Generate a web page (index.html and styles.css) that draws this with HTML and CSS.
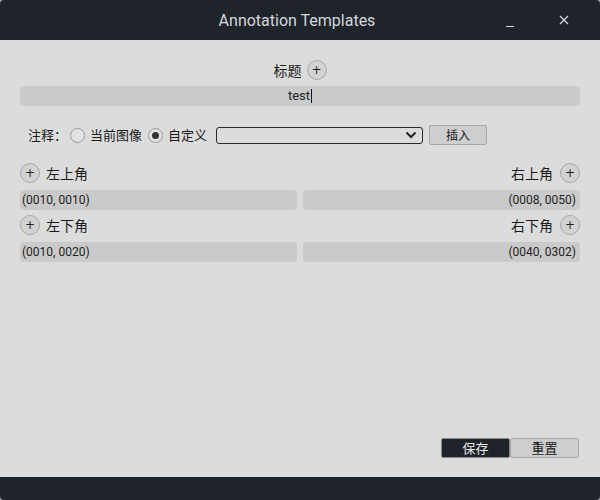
FILE: index.html
```html
<!DOCTYPE html>
<html>
<head>
<meta charset="utf-8">
<link rel="stylesheet" href="styles.css">
</head>
<body>
<div class="window">
  <div class="titlebar">
    <div></div>
    <div class="title">Annotation Templates</div>
    <div class="controls">
      <span class="ctl min"><svg width="10" height="10" viewBox="0 0 10 10"><path d="M1 8.5h8" stroke="#d6d9de" stroke-width="1"/></svg></span>
      <span class="ctl close"><svg width="10" height="10" viewBox="0 0 10 10"><path d="M1 1l8 8M9 1l-8 8" stroke="#d6d9de" stroke-width="1.2"/></svg></span>
    </div>
  </div>
  <div class="content">
    <div class="head-row">
      <span class="label">标题</span>
      <span class="plus">+</span>
    </div>
    <div class="field center">test<span class="caret"></span></div>
    <div class="note-row">
      <span class="label sm">注释：</span>
      <span class="radio first"></span><span class="label sm">当前图像</span>
      <span class="radio checked"></span><span class="label sm">自定义</span>
      <div class="select"><svg width="12" height="8" viewBox="0 0 12 8"><path d="M1.5 1.5l4.5 4.5 4.5-4.5" fill="none" stroke="#222" stroke-width="2"/></svg></div>
      <span class="btn">插入</span>
    </div>
    <div class="corner-row first">
      <div class="corner"><span class="plus">+</span><span class="label">左上角</span></div>
      <div class="corner right"><span class="label">右上角</span><span class="plus">+</span></div>
    </div>
    <div class="fields">
      <div class="field">(0010, 0010)</div>
      <div class="field end">(0008, 0050)</div>
    </div>
    <div class="corner-row">
      <div class="corner"><span class="plus">+</span><span class="label">左下角</span></div>
      <div class="corner right"><span class="label">右下角</span><span class="plus">+</span></div>
    </div>
    <div class="fields">
      <div class="field">(0010, 0020)</div>
      <div class="field end">(0040, 0302)</div>
    </div>
    <div class="actions">
      <span class="btn dark">保存</span>
      <span class="btn wide">重置</span>
    </div>
  </div>
  <div class="bottombar"></div>
</div>
</body>
</html>
```

FILE: styles.css
```css
html, body {
  margin: 0;
  padding: 0;
  background: #9ea3a8;
}
.window {
  width: 600px;
  height: 500px;
  display: flex;
  flex-direction: column;
  background: #dcdcdc;
  border-radius: 4px;
  overflow: hidden;
  font-family: "Noto Sans CJK SC", "Noto Sans", sans-serif;
  color: #1a1a1a;
}
.titlebar {
  height: 40px;
  flex: none;
  background: #1f232a;
  display: grid;
  grid-template-columns: 1fr auto 1fr;
  align-items: center;
}
.title {
  font-family: Roboto, sans-serif;
  font-size: 16px;
  color: #d3d7dc;
  margin-left: -6px;
}
.controls {
  display: flex;
  justify-content: flex-end;
  padding-right: 18px;
  gap: 18px;
}
.ctl {
  width: 36px;
  height: 20px;
  display: flex;
  align-items: center;
  justify-content: center;
}
.ctl.min svg { margin-top: 6px; }
.content {
  flex: 1;
  display: flex;
  flex-direction: column;
  padding: 20px 20px 19px 20px;
}
.head-row {
  display: flex;
  justify-content: center;
  align-items: center;
  gap: 5px;
  height: 20px;
}
.label {
  font-size: 14px;
  line-height: 20px;
}
.label.sm { font-size: 13px; }
.plus {
  width: 18px;
  height: 18px;
  border: 1px solid #a8a8a8;
  border-radius: 50%;
  background: #d2d2d2;
  display: flex;
  align-items: center;
  justify-content: center;
  font-family: "DejaVu Sans", sans-serif;
  font-size: 12px;
  line-height: 1;
  color: #222;
  flex: none;
}
.field {
  height: 20px;
  background: #cacaca;
  border-radius: 4px;
  font-family: Roboto, sans-serif;
  font-size: 12px;
  line-height: 20px;
  padding: 0 2px;
  color: #222;
  display: flex;
  align-items: center;
}
.field.center {
  margin-top: 6px;
  justify-content: center;
  font-size: 13px;
}
.field.end { justify-content: flex-end; padding-right: 4px; }
.caret {
  width: 1px;
  height: 14px;
  background: #111;
  margin-left: 1px;
}
.note-row {
  margin-top: 19px;
  height: 20px;
  display: flex;
  align-items: center;
  padding-left: 8px;
}
.radio {
  box-sizing: border-box;
  width: 15px;
  height: 15px;
  border: 1px solid #9a9a9a;
  border-radius: 50%;
  background: #e2e2e2;
  margin: 0 5px 0 6px;
  display: flex;
  align-items: center;
  justify-content: center;
}
.radio.first { margin-left: 3px; }
.radio.checked::after {
  content: "";
  width: 7px;
  height: 7px;
  border-radius: 50%;
  background: #333;
}
.select {
  margin-left: 9px;
  width: 200px;
  height: 15px;
  border: 1.5px solid #2a2a2a;
  border-radius: 3px;
  display: flex;
  align-items: center;
  justify-content: flex-end;
  padding-right: 5px;
}
.btn {
  margin-left: 6px;
  width: 56px;
  height: 18px;
  border: 1px solid #a8a8a8;
  border-radius: 2px;
  background: #cecece;
  font-size: 12px;
  line-height: 18px;
  text-align: center;
  color: #1a1a1a;
}
.corner-row {
  margin-top: 5px;
  height: 20px;
  display: flex;
  justify-content: space-between;
  align-items: center;
}
.corner-row.first { margin-top: 18px; }
.corner {
  display: flex;
  align-items: center;
  gap: 6px;
}
.corner.right { gap: 7px; }
.fields {
  margin-top: 7px;
  display: grid;
  grid-template-columns: 1fr 1fr;
  gap: 6px;
}
.actions {
  margin-top: auto;
  display: flex;
  justify-content: flex-end;
  padding-right: 1px;
}
.actions .btn {
  margin-left: 0;
  width: 67px;
  height: 18px;
  font-size: 13px;
}
.actions .btn.dark {
  background: #1f232a;
  color: #e8e8e8;
  border-color: #888;
}
.bottombar {
  height: 23px;
  flex: none;
  background: #1f232a;
}
```
